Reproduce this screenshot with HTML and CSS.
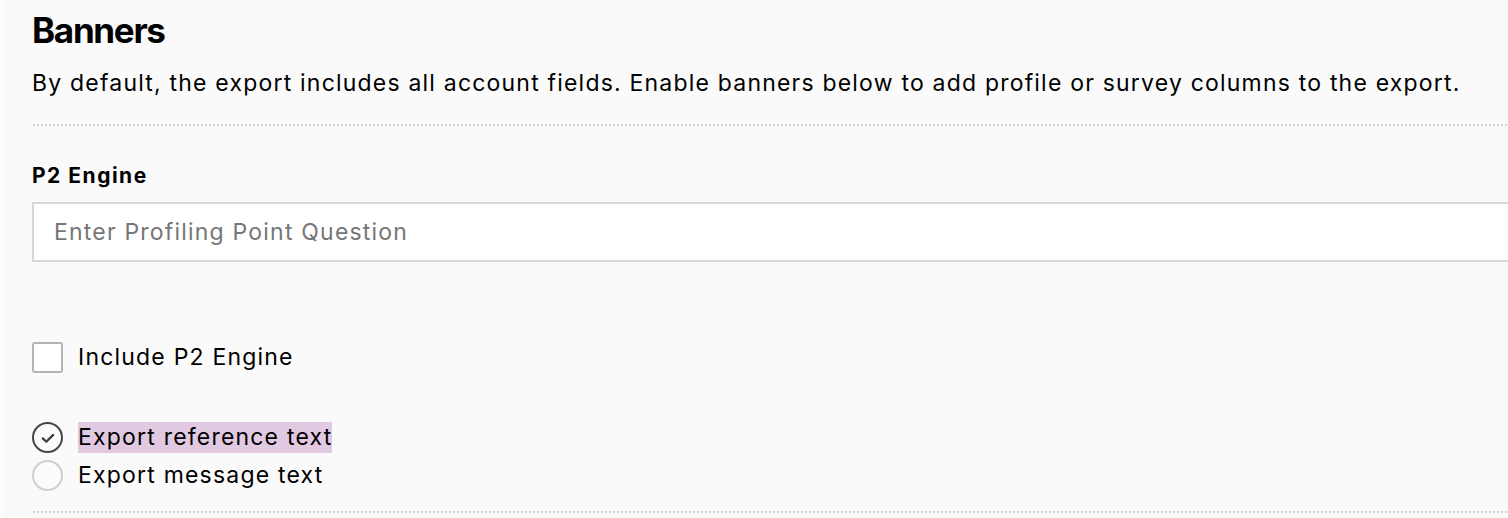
FILE: index.html
```html
<!DOCTYPE html>
<html lang="en">
<head>
<meta charset="utf-8">
<title>Banners</title>
<link rel="stylesheet" href="styles.css">
</head>
<body>
<main class="panel">
  <header class="intro">
    <h2 class="title">Banners</h2>
    <p class="desc">By default, the export includes all account fields. Enable banners below to add profile or survey columns to the export.</p>
  </header>
  <div class="divider"></div>
  <section class="field">
    <label class="field-label" for="p2q">P2 Engine</label>
    <input class="text-input" id="p2q" type="text" placeholder="Enter Profiling Point Question">
  </section>
  <label class="check-row">
    <span class="checkbox"></span>
    <span class="row-text">Include P2 Engine</span>
  </label>
  <div class="radio-group">
    <label class="radio-row">
      <span class="radio radio-on">
        <svg viewBox="0 0 30 30" width="30" height="30" aria-hidden="true"><path d="M9.8 15.4 L13.3 18.7 L20.2 11.9" fill="none" stroke="#3a3a3a" stroke-width="2.2" stroke-linecap="round" stroke-linejoin="round"/></svg>
      </span>
      <span class="row-text highlight">Export reference text</span>
    </label>
    <label class="radio-row">
      <span class="radio"></span>
      <span class="row-text">Export message text</span>
    </label>
  </div>
  <div class="divider divider-bottom"></div>
</main>
</body>
</html>
```
FILE: styles.css
```css
html, body {
  margin: 0;
  padding: 0;
}

html {
  background: linear-gradient(90deg, #fdfdfd 0 3px, #fafafa 3px);
}

body {
  font-family: Inter, "Noto Sans", sans-serif;
  color: #000;
  overflow: hidden;
}

.panel {
  padding: 10px 0 0 32px;
}

.title {
  margin: 0;
  font-size: 35px;
  line-height: 40px;
  font-weight: 700;
  letter-spacing: -1.3px;
}

.desc {
  margin: 19px 0 0;
  font-size: 23px;
  line-height: 28px;
  letter-spacing: 1.2px;
  white-space: nowrap;
}

.divider {
  margin: 27px 0 0 1px;
  height: 2px;
  background: repeating-linear-gradient(90deg, #d2d2d2 0 2px, transparent 2px 4px);
}

.field {
  display: flex;
  flex-direction: column;
  margin-top: 38px;
}

.field-label {
  font-size: 21px;
  line-height: 24px;
  font-weight: 700;
  letter-spacing: 1.5px;
}

.text-input {
  margin-top: 14px;
  width: 1520px;
  height: 60px;
  box-sizing: border-box;
  border: 2px solid #d7d7d7;
  background: #fff;
  padding: 0 20px;
  font-family: inherit;
  font-size: 23px;
  letter-spacing: 1.2px;
  color: #111;
  outline: none;
}

.text-input::placeholder {
  color: #767676;
}

.check-row,
.radio-row {
  display: flex;
  align-items: center;
  gap: 15px;
  height: 31px;
}

.check-row {
  margin-top: 80px;
}

.checkbox {
  width: 31px;
  height: 31px;
  box-sizing: border-box;
  border: 2px solid #b4b4b4;
  border-radius: 3px;
  background: #fff;
  flex: none;
}

.row-text {
  font-size: 23px;
  line-height: 31px;
  letter-spacing: 1.2px;
}

.radio-group {
  display: flex;
  flex-direction: column;
  gap: 7px;
  margin-top: 49px;
}

.radio {
  width: 31px;
  height: 31px;
  box-sizing: border-box;
  border: 2px solid #cfcfcf;
  border-radius: 50%;
  background: #fbfbfb;
  flex: none;
  display: flex;
  align-items: center;
  justify-content: center;
}

.radio svg {
  display: block;
  flex: none;
}

.radio-on {
  border-color: #454545;
}

.highlight {
  background: #e1c9e1;
}

.divider-bottom {
  margin-top: 20px;
}
```
